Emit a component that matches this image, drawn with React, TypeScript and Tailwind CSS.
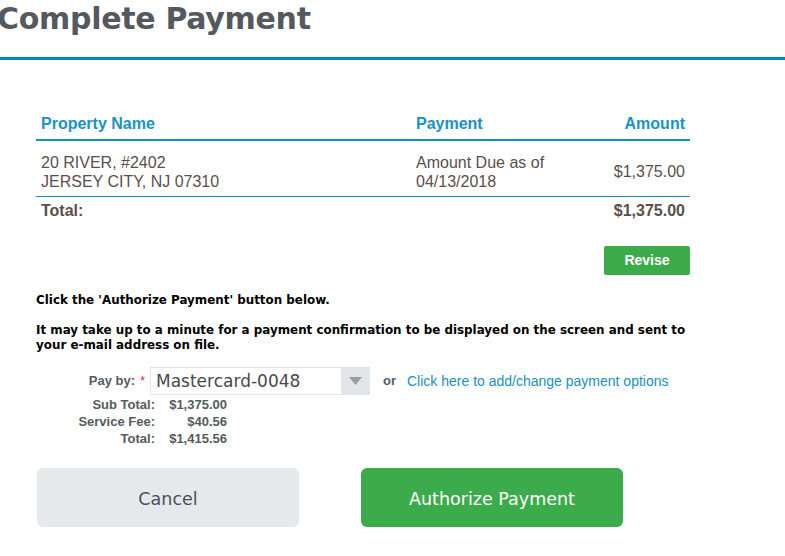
import React from 'react'

// ── Data ───────────────────────────────────────────────────────────────────

const FEES = [
  { label: 'Sub Total:', value: '$1,375.00' },
  { label: 'Service Fee:', value: '$40.56' },
  { label: 'Total:', value: '$1,415.56' },
]

const verdana = { fontFamily: '"DejaVu Sans", Verdana, sans-serif' }
const arial = { fontFamily: '"Liberation Sans", Arial, sans-serif' }

// ── Main component ─────────────────────────────────────────────────────────

export default function App() {
  return (
    <div className="w-[785px] h-[556px] overflow-hidden bg-white">
      {/* Header */}
      <h1
        style={verdana}
        className="ml-[-3px] pt-[1px] h-[57px] text-[30px] font-bold leading-[36px] text-[#53595e] tracking-[-0.3px] whitespace-nowrap"
      >
        Complete Payment
      </h1>
      <div className="h-[3px] bg-[#0089b5]" />

      {/* Summary table */}
      <div style={arial} className="ml-[36px] w-[654px] mt-[52px]">
        <table className="w-full border-collapse text-[16px]">
          <thead>
            <tr className="border-b-2 border-[#0f93c2] text-[#1793c3]">
              <th className="pl-[5px] pb-[3px] text-left font-bold h-[24px] align-middle">Property Name</th>
              <th className="pl-[1px] pb-[3px] text-left font-bold w-[175px]">Payment</th>
              <th className="pr-[5px] pb-[3px] text-right font-bold w-[100px]">Amount</th>
            </tr>
          </thead>
          <tbody className="text-[#5a4f4b]">
            <tr className="border-b border-[#0f93c2]">
              <td className="pl-[5px] h-[56px] leading-[19px] pt-[8px]">
                20 RIVER, #2402
                <br />
                JERSEY CITY, NJ 07310
              </td>
              <td className="pl-[1px] leading-[19px] pt-[8px]">
                Amount Due as of
                <br />
                04/13/2018
              </td>
              <td className="pr-[5px] text-right pt-[8px]">$1,375.00</td>
            </tr>
            <tr className="font-bold">
              <td className="pl-[5px] h-[28px] pt-[1px]">Total:</td>
              <td />
              <td className="pr-[5px] text-right pt-[1px]">$1,375.00</td>
            </tr>
          </tbody>
        </table>

        <div className="flex justify-end mt-[22px]">
          <button className="w-[86px] h-[29px] rounded-[2px] bg-[#3cab4b] text-white text-[14px] font-bold">
            Revise
          </button>
        </div>
      </div>

      {/* Instructions */}
      <div style={verdana} className="ml-[36px] w-[655px] mt-[18px] text-[11.9px] font-bold text-black leading-[15px]">
        <p>Click the 'Authorize Payment' button below.</p>
        <p className="mt-[15px]">
          It may take up to a minute for a payment confirmation to be displayed on the screen and sent to your
          e-mail address on file.
        </p>
      </div>

      {/* Pay by */}
      <div className="flex items-center mt-[14px] h-[28px]">
        <span style={arial} className="w-[135px] text-right text-[13px] font-bold text-[#555b60]">
          Pay by:
        </span>
        <span style={arial} className="ml-[5px] w-[10px] text-[13px] text-[#d8266d]">*</span>
        <div className="flex w-[220px] h-[28px] border border-[#e3e6e8]">
          <span style={verdana} className="flex-1 pl-[5px] text-[17px] leading-[26px] text-[#45494c]">
            Mastercard-0048
          </span>
          <span className="w-[28px] bg-[#e3e6e8] flex items-center justify-center">
            <svg width="13" height="8" viewBox="0 0 13 8">
              <path d="M0 0h13L6.5 8z" fill="#9a9c9e" />
            </svg>
          </span>
        </div>
        <span style={arial} className="ml-[13px] text-[13px] font-bold text-[#555b60]">or</span>
        <a style={arial} className="ml-[11px] text-[14px] text-[#1a8fc0]">
          Click here to add/change payment options
        </a>
      </div>

      {/* Fees */}
      <div style={arial} className="mt-[1px] grid grid-cols-[155px_72px] text-[13px] font-bold text-[#555b60] leading-[17px]">
        {FEES.map(f => (
          <React.Fragment key={f.label}>
            <span className="text-right">{f.label}</span>
            <span className="text-right">{f.value}</span>
          </React.Fragment>
        ))}
      </div>

      {/* Actions */}
      <div style={verdana} className="flex gap-[62px] ml-[37px] mt-[21px]">
        <button className="w-[262px] h-[59px] pt-[3px] rounded-[6px] bg-[#e5e9ec] text-[17.5px] text-[#4b5156]">
          Cancel
        </button>
        <button className="w-[262px] h-[59px] pt-[3px] rounded-[6px] bg-[#3cab4b] text-[17.5px] text-white">
          Authorize Payment
        </button>
      </div>
    </div>
  )
}
